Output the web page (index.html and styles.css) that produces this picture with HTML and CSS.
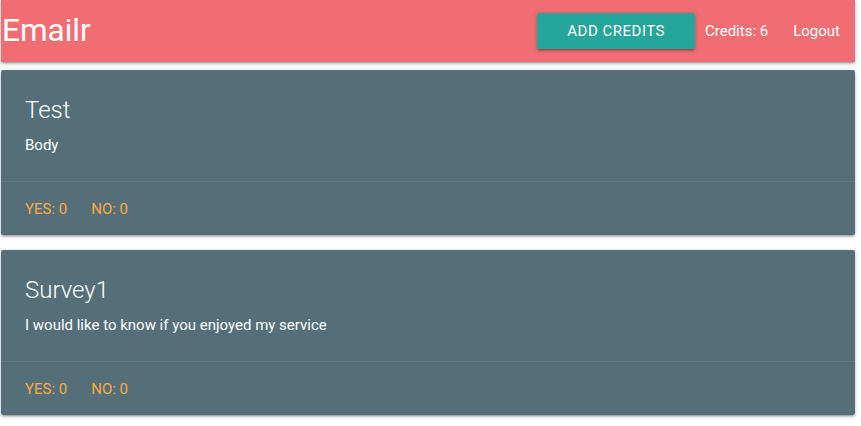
FILE: index.html
```html
<!DOCTYPE html>
<html>
<head>
<meta charset="utf-8">
<link rel="stylesheet" href="styles.css">
</head>
<body>
<div class="page">
  <nav class="nav">
    <a class="brand" href="#">Emailr</a>
    <ul class="menu">
      <li><a class="btn" href="#">Add Credits</a></li>
      <li class="credits">Credits: 6</li>
      <li><a class="link" href="#">Logout</a></li>
    </ul>
  </nav>
  <div class="card">
    <div class="card-content">
      <span class="card-title">Test</span>
      <p>Body</p>
    </div>
    <div class="card-action">
      <a href="#">Yes: 0</a>
      <a href="#">No: 0</a>
    </div>
  </div>
  <div class="card">
    <div class="card-content">
      <span class="card-title">Survey1</span>
      <p>I would like to know if you enjoyed my service</p>
    </div>
    <div class="card-action">
      <a href="#">Yes: 0</a>
      <a href="#">No: 0</a>
    </div>
  </div>
</div>
</body>
</html>
```
FILE: styles.css
```css
html, body {
  margin: 0;
  padding: 0;
  background: #fff;
  font-family: Roboto, "Liberation Sans", sans-serif;
  font-size: 15px;
  line-height: 1.5;
}
.page {
  margin-left: 1px;
  width: 854px;
}
.nav {
  height: 62px;
  background: #f06e73;
  display: flex;
  align-items: center;
  justify-content: space-between;
  box-shadow: 0 2px 2px 0 rgba(0,0,0,0.14), 0 3px 1px -2px rgba(0,0,0,0.12), 0 1px 5px 0 rgba(0,0,0,0.2);
}
.brand {
  color: #fff;
  text-decoration: none;
  font-size: 31.5px;
  line-height: 62px;
  margin-left: 1px;
}
.menu {
  list-style: none;
  margin: 0;
  padding: 0;
  display: flex;
  align-items: center;
}
.btn {
  display: block;
  background: #26a69a;
  color: #fff;
  text-decoration: none;
  text-transform: uppercase;
  font-size: 15px;
  letter-spacing: 0.5px;
  height: 36px;
  line-height: 36px;
  padding: 0 30px;
  border-radius: 2px;
  box-shadow: 0 2px 2px 0 rgba(0,0,0,0.14), 0 3px 1px -2px rgba(0,0,0,0.12), 0 1px 5px 0 rgba(0,0,0,0.2);
}
.credits {
  color: #fff;
  font-size: 15px;
  margin-left: 10px;
  margin-right: 10px;
}
.link {
  color: #fff;
  text-decoration: none;
  font-size: 15px;
  padding: 0 15px;
}
.card {
  background: #546e7a;
  color: #fff;
  border-radius: 2px;
  margin: 8px 0 15px;
  box-shadow: 0 2px 2px 0 rgba(0,0,0,0.14), 0 3px 1px -2px rgba(0,0,0,0.12), 0 1px 5px 0 rgba(0,0,0,0.2);
}
.card-content {
  padding: 24px;
}
.card-title {
  display: block;
  font-size: 24px;
  font-weight: 300;
  line-height: 32px;
  margin-bottom: 8px;
}
.card-content p {
  margin: 0;
}
.card-action {
  border-top: 1px solid rgba(160,160,160,0.2);
  padding: 16px 24px 15px;
  display: flex;
  gap: 24px;
}
.card-action a {
  color: #ffab40;
  text-decoration: none;
  text-transform: uppercase;
}
```
